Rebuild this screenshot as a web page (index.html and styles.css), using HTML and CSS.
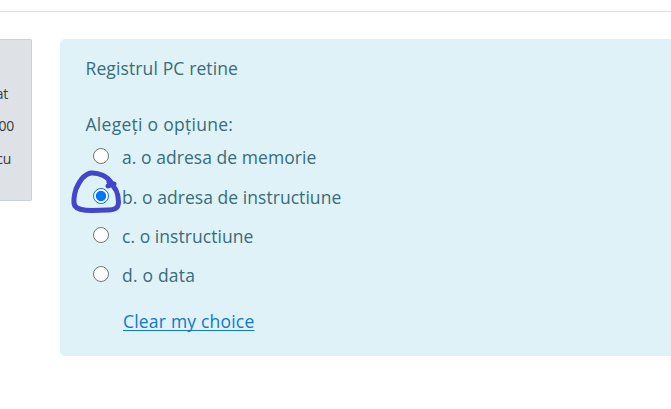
FILE: index.html
```html
<!DOCTYPE html>
<html lang="ro">
<head>
<meta charset="utf-8">
<title>Quiz</title>
<link rel="stylesheet" href="styles.css">
</head>
<body>
<div class="divider"></div>
<main class="question">
  <aside class="info">
    <div class="state">at</div>
    <div class="grade">00</div>
    <div class="flag">cu</div>
  </aside>
  <section class="content">
    <p class="qtext">Registrul PC retine</p>
    <p class="prompt">Alegeți o opțiune:</p>
    <div class="answers">
      <label class="answer"><input type="radio" name="q"><span>a. o adresa de memorie</span></label>
      <label class="answer selected"><input type="radio" name="q" checked><span>b. o adresa de instructiune</span>
        <svg class="ink" width="54" height="48" viewBox="70 168 54 48"><path d="M112 184C108 176 98 172.500 91 173C84 174 79 182 76 189C74 195 73 203 75 206C77 209 83 210.500 92 210.500L108 210C115 210 118.500 208 118.500 202C118.500 194 116 187 109 182L114 184L108 186"/></svg>
      </label>
      <label class="answer"><input type="radio" name="q"><span>c. o instructiune</span></label>
      <label class="answer"><input type="radio" name="q"><span>d. o data</span></label>
    </div>
    <a class="clear" href="#">Clear my choice</a>
  </section>
</main>
</body>
</html>
```
FILE: styles.css
```css
* { box-sizing: border-box; }
body {
  margin: 0;
  height: 409px;
  overflow: hidden;
  background: #fff;
  font-family: "Open Sans", "Noto Sans", sans-serif;
}
.divider { height: 12px; border-bottom: 1px solid #dee2e6; }
.question { display: flex; align-items: flex-start; padding-top: 27px; }
.info {
  width: 32px;
  height: 162px;
  margin-right: 28px;
  padding-top: 38px;
  border: 1px solid #cad0d7;
  border-left: 0;
  border-radius: 0 2px 2px 0;
  background: #dee2e6;
  color: #373a3c;
  font-size: 14px;
  line-height: 32px;
  display: flex;
  flex-direction: column;
  overflow: hidden;
}
.info div { display: flex; justify-content: flex-end; width: 8px; letter-spacing: -0.3px; }
.info .grade { width: 14px; }
.info .flag { width: 11px; line-height: 33px; }
.content {
  flex: 1;
  height: 317px;
  padding: 15px 0 0 25.5px;
  border-radius: 5px 0 0 5px;
  background: #def2f8;
  color: #3a6c7b;
  font-size: 17.5px;
  letter-spacing: 0.05px;
  line-height: 28px;
  white-space: nowrap;
}
.qtext { margin: 0 0 28px; letter-spacing: 0.12px; }
.prompt { margin: 0 0 5px; letter-spacing: 0.28px; }
.answers { display: flex; flex-direction: column; }
.answer { position: relative; display: flex; align-items: flex-start; height: 39px; }
.answer:first-child { height: 40px; }
.answer:last-child { letter-spacing: 0.2px; }
.answer input {
  appearance: none;
  width: 16px;
  height: 16px;
  margin: 5px 13px 0 7.5px;
  border: 1px solid #767676;
  border-radius: 50%;
  background: #fff;
}
.answer input:checked {
  border-color: #0075ff;
  background: radial-gradient(circle, #0075ff 4.8px, #fff 5.4px);
}
.ink {
  position: absolute;
  left: -15.5px;
  top: -15px;
  fill: none;
  stroke: #4146cb;
  stroke-width: 5;
  stroke-linecap: round;
  stroke-linejoin: round;
}
.clear {
  display: inline-block;
  margin: 7px 0 0 37.5px;
  color: #1177d1;
  letter-spacing: 0.2px;
  text-decoration: underline;
  text-decoration-thickness: 1px;
  text-underline-offset: 2px;
  text-decoration-skip-ink: none;
}
```
